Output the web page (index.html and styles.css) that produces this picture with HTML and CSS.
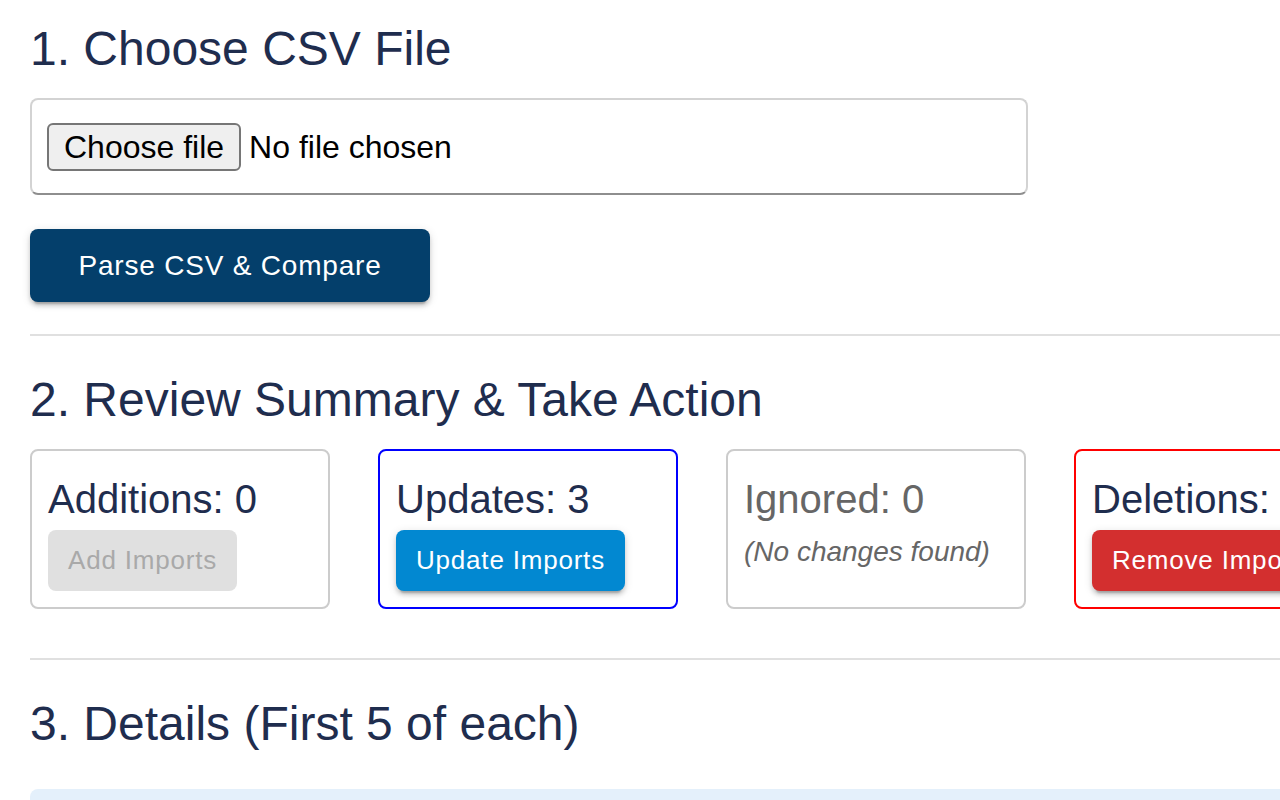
FILE: index.html
```html
<!DOCTYPE html>
<html lang="en">
<head>
<meta charset="utf-8">
<title>CSV Import</title>
<link rel="stylesheet" href="styles.css">
</head>
<body>
<main class="page">
  <h2 class="section-title">1. Choose CSV File</h2>
  <div class="file-box">
    <button type="button" class="file-btn">Choose file</button>
    <span class="file-name">No file chosen</span>
  </div>
  <button type="button" class="btn btn-primary btn-parse">Parse CSV &amp; Compare</button>

  <hr class="divider divider-first">

  <h2 class="section-title">2. Review Summary &amp; Take Action</h2>
  <div class="cards">
    <div class="card">
      <div class="card-title">Additions: 0</div>
      <button type="button" class="btn btn-small btn-disabled">Add Imports</button>
    </div>
    <div class="card card-blue">
      <div class="card-title">Updates: 3</div>
      <button type="button" class="btn btn-small btn-info">Update Imports</button>
    </div>
    <div class="card">
      <div class="card-title card-title-muted">Ignored: 0</div>
      <div class="card-note">(No changes found)</div>
    </div>
    <div class="card card-red">
      <div class="card-title">Deletions: 2</div>
      <button type="button" class="btn btn-small btn-error">Remove Imports</button>
    </div>
  </div>

  <hr class="divider divider-second">

  <h2 class="section-title">3. Details (First 5 of each)</h2>
  <div class="alert"></div>
</main>
</body>
</html>
```

FILE: styles.css
```css
html, body {
  margin: 0;
  padding: 0;
  overflow: hidden;
  background: #ffffff;
}

body {
  font-family: "Liberation Sans", Helvetica, Arial, sans-serif;
  color: #1f2d4e;
}

.page {
  width: 1344px;
  padding: 14px 0 0 30px;
  display: flex;
  flex-direction: column;
  align-items: flex-start;
}

.section-title {
  margin: 0;
  padding-top: 3px;
  font-size: 48px;
  line-height: 64px;
  font-weight: 400;
  color: #1f2d4e;
}

.file-box {
  box-sizing: border-box;
  width: 998px;
  margin-top: 17px;
  padding: 23px 15px 22px;
  border: 2px solid #d3d3d3;
  border-bottom-color: #8e8e8e;
  border-radius: 8px;
  display: flex;
  align-items: center;
  gap: 8px;
}

.file-btn {
  box-sizing: border-box;
  height: 48px;
  padding: 0 15px;
  border: 2px solid #767676;
  border-radius: 6px;
  background: #efefef;
  color: #000000;
  font-family: "Liberation Sans", Helvetica, Arial, sans-serif;
  font-size: 32px;
  line-height: 44px;
}

.file-name {
  font-size: 32px;
  color: #000000;
}

.btn {
  border: none;
  border-radius: 8px;
  font-family: "Liberation Sans", Helvetica, Arial, sans-serif;
  font-weight: 400;
  letter-spacing: 0.8px;
  color: #ffffff;
  box-shadow: 0 6px 2px -4px rgba(0,0,0,0.2), 0 4px 4px 0 rgba(0,0,0,0.14), 0 2px 10px 0 rgba(0,0,0,0.12);
}

.btn-primary {
  background: #043f6b;
}

.btn-parse {
  margin-top: 34px;
  min-width: 400px;
  padding: 12px 32px;
  font-size: 28px;
  line-height: 49px;
}

.btn-small {
  padding: 8px 20px;
  font-size: 26px;
  line-height: 45px;
}

.btn-disabled {
  background: #e0e0e0;
  color: #a9a9a9;
  box-shadow: none;
}

.btn-info {
  background: #0288d1;
}

.btn-error {
  background: #d32f2f;
}

.divider {
  align-self: stretch;
  height: 2px;
  border: none;
  margin: 0;
  background: #e0e0e0;
}

.divider-first {
  margin-top: 32px;
  margin-bottom: 29px;
}

.divider-second {
  margin-top: 49px;
  margin-bottom: 29px;
}

.cards {
  margin-top: 17px;
  display: flex;
  gap: 48px;
}

.card {
  box-sizing: border-box;
  width: 300px;
  height: 160px;
  padding: 16px;
  border: 2px solid #cccccc;
  border-radius: 8px;
  display: flex;
  flex-direction: column;
  align-items: flex-start;
}

.card-blue {
  border-color: #0000ff;
}

.card-red {
  border-color: #ff0000;
}

.card-title {
  font-size: 40px;
  line-height: 63px;
  padding-top: 1px;
  margin-bottom: -1px;
  white-space: nowrap;
  color: #1f2d4e;
}

.card-title-muted {
  color: #666666;
}

.card-note {
  font-size: 28px;
  line-height: 36px;
  font-style: italic;
  color: #666666;
  margin-top: 4px;
}

.alert {
  box-sizing: border-box;
  align-self: stretch;
  margin-top: 33px;
  height: 120px;
  border-radius: 8px;
  background: #e4f0fb;
}
```
